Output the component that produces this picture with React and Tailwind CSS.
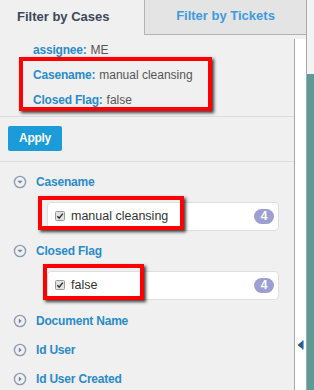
import React from 'react';

const FONT = { fontFamily: '"Liberation Sans", Arial, sans-serif' };

function CircleIcon({ open }) {
  return (
    <svg width="14" height="14" viewBox="0 0 14 14" className="shrink-0">
      <circle cx="7" cy="7" r="5.6" fill="none" stroke="#8a9bb3" strokeWidth="1.4" />
      {open ? (
        <path d="M4.4 5.8 L9.6 5.8 L7 8.6 Z" fill="#6f86a5" />
      ) : (
        <path d="M5.8 4.4 L8.7 7 L5.8 9.6 Z" fill="#6f86a5" />
      )}
    </svg>
  );
}

function CheckBox() {
  return (
    <svg width="10" height="10" viewBox="0 0 10 10" className="shrink-0">
      <rect x="0.5" y="0.5" width="9" height="9" rx="1" fill="#e2e2e2" stroke="#9a9a9a" />
      <path d="M2.3 5.2 L4.2 7.1 L7.8 2.6" fill="none" stroke="#333" strokeWidth="1.5" />
    </svg>
  );
}

function Header({ label, open }) {
  return (
    <div className="h-[29px] flex items-center pl-[13px] gap-[9px]">
      <CircleIcon open={open} />
      <span className="text-[12px] font-bold text-[#2b8bc8] tracking-[-0.2px]">{label}</span>
    </div>
  );
}

function Item({ label, count, last }) {
  return (
    <div
      className={`ml-[47px] mr-[15px] mt-[5px] ${last ? 'mb-[7px]' : 'mb-[6px]'} h-[29px] bg-white border border-[#dedede] rounded-[4px] flex items-center pl-[7px] pr-[4px]`}
    >
      <CheckBox />
      <span className="ml-[6px] text-[12.5px] text-[#333] flex-1">{label}</span>
      <span className="w-[20px] h-[15px] rounded-full bg-[#9d9fd2] text-white text-[12px] font-bold flex items-center justify-center leading-none">
        {count}
      </span>
    </div>
  );
}

const marks = [
  { l: 'left-[19px]', t: 'top-[57px]', w: 'w-[193px]', h: 'h-[54px]' },
  { l: 'left-[38px]', t: 'top-[196px]', w: 'w-[146px]', h: 'h-[34px]' },
  { l: 'left-[43px]', t: 'top-[264px]', w: 'w-[101px]', h: 'h-[36px]' },
];

export default function App() {
  return (
    <div className="relative w-[314px] h-[390px] overflow-hidden bg-[#f0f0f0] flex" style={FONT}>
      <div className="w-[306px] flex flex-col">
        {/* tabs */}
        <div className="h-[35px] flex shrink-0">
          <div className="w-[144px] flex items-center pl-[17px] pb-[2px] text-[13px] font-bold text-[#3b4858]">
            Filter by Cases
          </div>
          <div className="flex-1 bg-[#e4e4e4] border-l border-b border-[#b3b3b3] flex items-center justify-center pb-[2px] text-[13px] font-bold text-[#3d9bdc]">
            Filter by Tickets
          </div>
        </div>

        <div className="flex-1 flex">
          <div className="w-[294px] flex flex-col">
            <div className="pt-[2px] pb-[4px] border-b border-[#dcdcdc] text-[12px]">
              <div className="h-[25px] flex items-center pl-[33px]">
                <span className="font-bold text-[#2b8bc8] tracking-[-0.2px]">assignee:</span>
                <span className="ml-[4px] text-[#555]">ME</span>
              </div>
              <div className="h-[25px] flex items-center pl-[33px]">
                <span className="font-bold text-[#2b8bc8] tracking-[-0.2px]">Casename:</span>
                <span className="ml-[4px] text-[#555]">manual cleansing</span>
              </div>
              <div className="h-[25px] flex items-center pl-[33px]">
                <span className="font-bold text-[#2b8bc8] tracking-[-0.2px]">Closed Flag:</span>
                <span className="ml-[4px] text-[#555]">false</span>
              </div>
            </div>

            <div className="pt-[8px] pb-[10px] pl-[8px] border-b border-[#dcdcdc]">
              <button className="w-[54px] h-[25px] bg-[#1b9bd7] rounded-[2px] text-white text-[12px] font-bold tracking-[-0.3px]">
                Apply
              </button>
            </div>

            <div className="pt-[6px]">
              <Header label="Casename" open />
              <Item label="manual cleansing" count={4} />
              <Header label="Closed Flag" open />
              <Item label="false" count={4} last />
              <Header label="Document Name" />
              <Header label="Id User" />
              <Header label="Id User Created" />
            </div>
          </div>
          <div className="w-[1px] mt-[4px] bg-[#a9a9a9]" />
          <div className="w-[11px] mt-[4px] bg-white flex flex-col pt-[301px] pl-[2px]">
            <svg width="7" height="10" viewBox="0 0 7 10">
              <path d="M6 0.5 L0.5 5 L6 9.5 Z" fill="#2f5a66" />
              <path d="M6 0.5 L6 9.5" stroke="#1f6fd6" strokeWidth="1.2" />
            </svg>
          </div>
        </div>
      </div>
      <div className="w-[1px] bg-[#a9a9a9]" />
      <div className="w-[7px] flex flex-col">
        <div className="h-[74px] bg-[#f3f3f3]" />
        <div className="flex-1 bg-[#5e9b98]" />
      </div>

      {marks.map((m, i) => (
        <div
          key={i}
          className={`absolute ${m.l} ${m.t} ${m.w} ${m.h} border-[4px] border-[#ff0000] shadow-[2px_2px_3px_rgba(0,0,0,0.75)] pointer-events-none`}
        />
      ))}
    </div>
  );
}
